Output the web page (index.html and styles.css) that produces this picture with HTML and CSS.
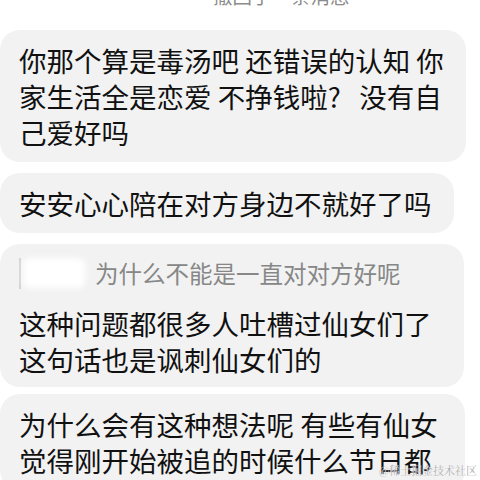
FILE: index.html
```html
<!DOCTYPE html>
<html lang="zh">
<head>
<meta charset="utf-8">
<link rel="stylesheet" href="styles.css">
</head>
<body>
<div class="page">
  <div class="notice">撤回了一条消息</div>
  <div class="chat">
    <div class="bubble">你那个算是毒汤吧 还错误的认知 你<br>家生活全是恋爱 不挣钱啦?&nbsp;&nbsp; 没有自<br>己爱好吗</div>
    <div class="bubble">安安心心陪在对方身边不就好了吗</div>
    <div class="bubble bubble-reply">
      <div class="quote">
        <span class="quote-bar"></span>
        <span class="quote-name"></span>
        <span class="quote-text">为什么不能是一直对对方好呢</span>
      </div>
      <div class="reply-text">这种问题都很多人吐槽过仙女们了<br>这句话也是讽刺仙女们的</div>
    </div>
    <div class="bubble bubble-last">为什么会有这种想法呢 有些有仙女<br>觉得刚开始被追的时候什么节日都</div>
  </div>
  <div class="watermark">@稀土掘金技术社区</div>
</div>
</body>
</html>
```
FILE: styles.css
```css
html, body {
  margin: 0;
  padding: 0;
  background: #ffffff;
}
.page {
  position: relative;
  width: 480px;
  height: 480px;
  overflow: hidden;
  font-family: "Noto Sans CJK SC", "Noto Sans", sans-serif;
  color: #111111;
}
.notice {
  margin-top: -14px;
  height: 20px;
  line-height: 20px;
  font-size: 19.5px;
  color: #8c8c8c;
  padding-left: 213px;
  margin-bottom: 24px;
}
.chat {
  display: flex;
  flex-direction: column;
  align-items: flex-start;
  gap: 11px;
}
.bubble {
  background: #f2f2f2;
  border-radius: 20px;
  padding: 12px 22px 12px 19px;
  font-size: 27.5px;
  line-height: 36px;
  white-space: nowrap;
}
.bubble-reply {
  padding-right: 32px;
  padding-bottom: 10px;
  margin-bottom: -4px;
}
.bubble-last {
  padding-right: 27px;
}
.quote {
  display: flex;
  align-items: center;
  height: 34px;
  margin-bottom: 15px;
}
.quote-bar {
  width: 2px;
  height: 31px;
  background: #d2d2d2;
  flex: none;
}
.quote-name {
  width: 62px;
  height: 30px;
  margin-left: 2px;
  background: #ffffff;
  border-radius: 6px;
  filter: blur(3px);
  flex: none;
}
.quote-text {
  margin-left: 10px;
  font-size: 23.5px;
  color: #878787;
  line-height: 34px;
}
.watermark {
  position: absolute;
  right: 3px;
  bottom: 3px;
  font-family: "Noto Serif CJK SC", "Noto Sans CJK SC", serif;
  font-size: 11px;
  line-height: 14px;
  color: #b0b0b0;
  text-shadow: 0 0 1px #ffffff;
}
```
